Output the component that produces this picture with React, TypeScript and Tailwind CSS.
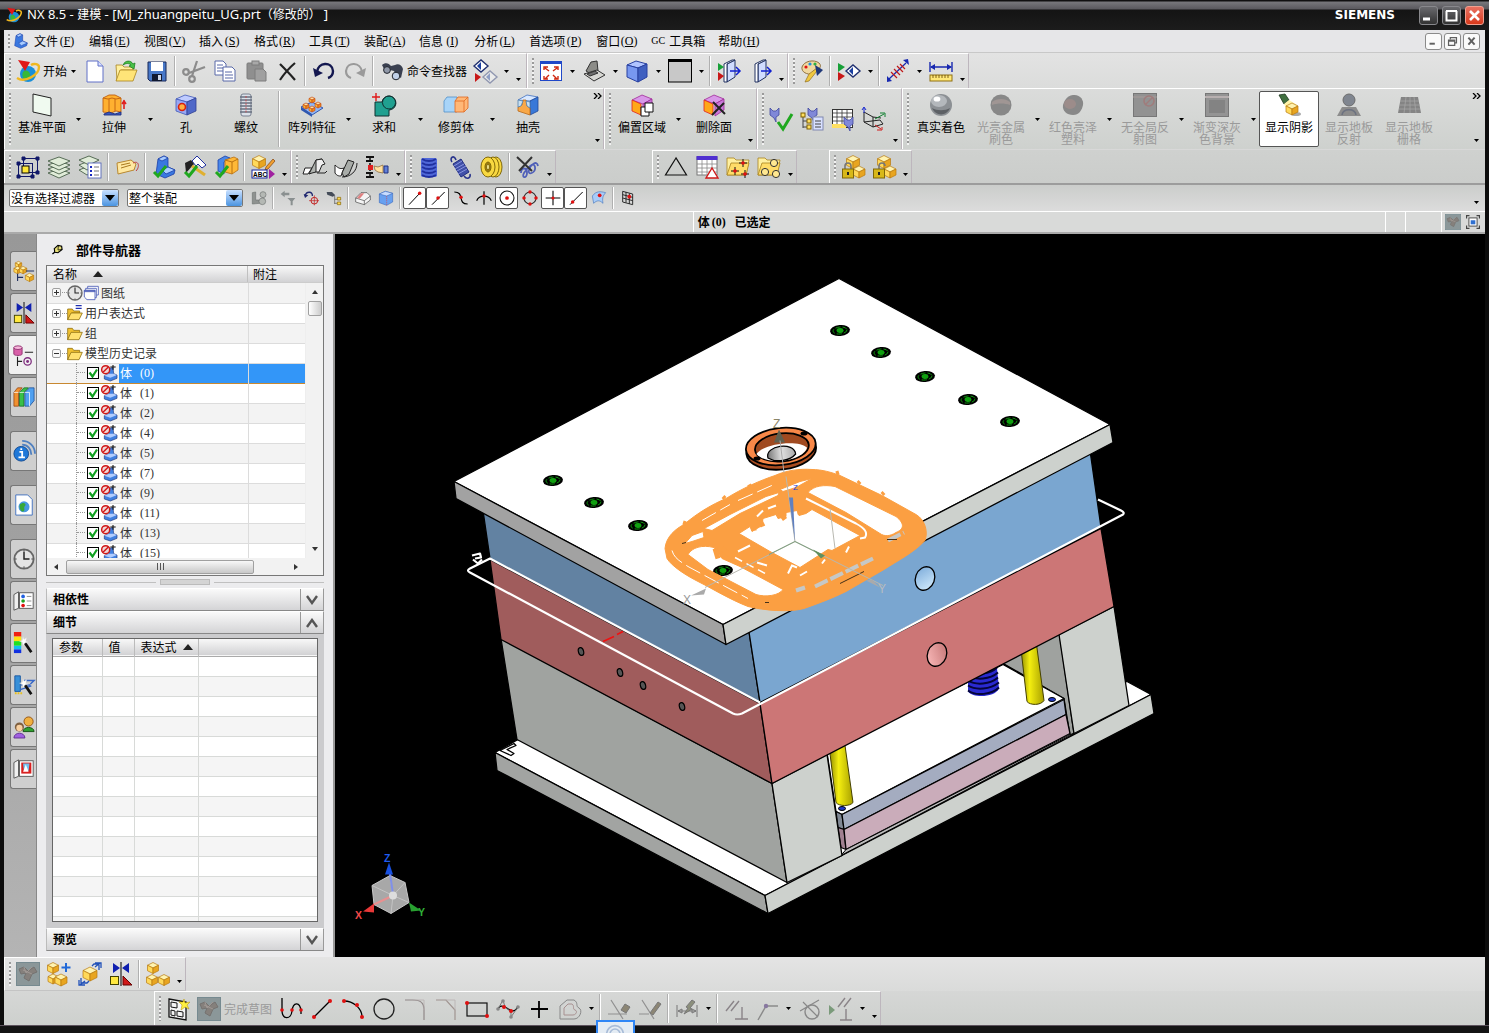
import React, { type ReactNode } from 'react';

/* ------------------------------------------------------------------ */
/* Icon drawings, all on a 24 x 24 grid                                */
/* ------------------------------------------------------------------ */

type Tone = 'yellow' | 'blue' | 'orange' | 'purple';
const tones: Record<Tone, [string, string, string, string]> = {
  yellow: ['#fff3b0', '#ffd95a', '#e8a520', '#b87a10'],
  blue: ['#b4c8ff', '#7c98f0', '#3f5fc8', '#26389a'],
  orange: ['#ffe0a0', '#ffb62e', '#f08a1a', '#c8501a'],
  purple: ['#e2b8f0', '#ffb010', '#c070d8', '#90309a'],
};

function Cube({ x, y, s, tone }: { x: number; y: number; s: number; tone: Tone }) {
  const [top, left, right, line] = tones[tone];
  const h = s / 2;
  const q = s / 4;
  return (
    <g stroke={line} strokeWidth="0.7" strokeLinejoin="round">
      <polygon points={`${x},${y - h} ${x + h},${y - q} ${x},${y} ${x - h},${y - q}`} fill={top} />
      <polygon points={`${x - h},${y - q} ${x},${y} ${x},${y + h} ${x - h},${y + q}`} fill={left} />
      <polygon points={`${x + h},${y - q} ${x},${y} ${x},${y + h} ${x + h},${y + q}`} fill={right} />
    </g>
  );
}

const Dot = ({ x, y, r = 1.8, c = '#e01010' }: { x: number; y: number; r?: number; c?: string }) => (
  <circle cx={x} cy={y} r={r} fill={c} />
);
const L = ({ d, c = '#000', w = 1 }: { d: string; c?: string; w?: number }) => (
  <path d={d} fill="none" stroke={c} strokeWidth={w} />
);
const GreenCheck = ({ d = 'M2 17l4 4L14 11' }: { d?: string }) => (
  <path d={d} fill="none" stroke="#1fa81f" strokeWidth="3" />
);
const BluePart = () => (
  <g stroke="#1a3fa8" strokeWidth="0.8" strokeLinejoin="round">
    <path d="M6 4l6-3 4 2v9l7 3-1 4-9 4-9-4z" fill="#3a78e0" />
    <path d="M6 4l6-3 4 2-6 3z" fill="#a8ccff" />
    <path d="M10 15l6-3 7 3-9 4z" fill="#a8ccff" />
  </g>
);
const FolderShape = () => (
  <g stroke="#a88420" strokeWidth="0.8">
    <path d="M1 3h7l2 2h13l-3 15H1z" fill="#fff0a0" />
    <path d="M1 20L5 8h18l-3 12z" fill="#ffdc68" />
  </g>
);
const Mirror = () => (
  <g>
    <path d="M4 1v10l7-5zM20 1v10l-7-5z" fill="#1020b0" />
    <L d="M12 0v24" />
    <rect x="1.5" y="14.5" width="8" height="8" fill="#ffe840" stroke="#404000" />
    <path d="M14 14v9h9z" fill="#d01818" stroke="#600" />
  </g>
);
const CubeTrio = () => (
  <g>
    <Cube x={7} y={6} s={11} tone="yellow" />
    <Cube x={6} y={18} s={11} tone="yellow" />
    <Cube x={18} y={18} s={11} tone="yellow" />
  </g>
);
const Gizmo = () => <path d="M1 1l3 3h3l3-3v7l-3 2v5l-2-4-4-3z" fill="#8088d8" stroke="#4048a0" strokeWidth="0.8" />;
const Wand = () => (
  <g>
    <path d="M11 9l9 13" stroke="#111" strokeWidth="3" />
    <path d="M11 5l1 3 3-2-1 4 3 1-4 1-2 3-1-4-3-1 3-1z" fill="#fff" stroke="#ccc" strokeWidth="0.4" />
  </g>
);
const Book = () => (
  <g stroke="#555">
    <path d="M1 5l5-3v18l-5 2z" fill="#f0f0f0" />
    <rect x="7" y="3" width="15" height="17" fill="#fff" />
  </g>
);
const Coil = () => (
  <g fill="none" stroke="#2030a0" strokeWidth="2">
    <path d="M5 4c5 3 9 3 14 0M5 8c5 3 9 3 14 0M5 12c5 3 9 3 14 0M5 16c5 3 9 3 14 0M5 20c5 3 9 3 14 0" />
  </g>
);
const ViewBook = () => (
  <g>
    <path d="M10 5l8-4v17l-8 5z" fill="#d0dcff" stroke="#203060" />
    <path d="M7 5l8-4h3l-8 4v18H7z" fill="#fff" stroke="#203060" />
    <path d="M13 12h9M19 8l4 4-4 4" stroke="#1020d0" strokeWidth="1.5" fill="none" />
  </g>
);
const Diamond = ({ x, y }: { x: number; y: number }) => (
  <g>
    <path d={`M${x - 7} ${y}l7-6 7 6-7 6z`} fill="#fff" stroke="#203070" strokeWidth="1.4" />
    <path d={`M${x} ${y - 4}v8l-4-4z`} fill="#1a3fa0" />
  </g>
);

const icons = {
  nx: (
    <g>
      <circle cx="12" cy="15" r="8" fill="#1a8fd8" />
      <path d="M7 13c3-3 6-1 7 2s-2 6-4 6-5-4-3-8z" fill="#38b838" />
      <path d="M1 19c8 5 22-3 22-11 0-3-5-4-8-2" fill="none" stroke="#f0b820" strokeWidth="2.4" />
      <path d="M2 1l12 2-5 9z" fill="#e01818" />
    </g>
  ),
  part: <BluePart />,
  newDoc: (
    <g>
      <path d="M4 2h11l5 5v16H4z" fill="#fff" stroke="#6070c8" />
      <path d="M15 2v5h5" fill="#d8e0ff" stroke="#6070c8" />
    </g>
  ),
  open: (
    <g stroke="#a88420" strokeWidth="0.8">
      <path d="M2 6h6l2 2h9v3H7L3 22z" fill="#fff0a0" />
      <path d="M2 22l4-11h17l-4 11z" fill="#ffe478" />
      <path d="M9 6c2-5 8-5 10-1l2-1-1 6-5-3 2-1c-2-2-5-2-8 0z" fill="#48c048" stroke="#208020" />
    </g>
  ),
  save: (
    <g>
      <path d="M3 3h18v19H5l-2-2z" fill="#4878c8" stroke="#182858" />
      <rect x="6" y="3" width="12" height="9" fill="#fff" />
      <rect x="7" y="15" width="10" height="7" fill="#101830" />
      <rect x="13" y="16" width="3" height="5" fill="#d0d8e8" />
    </g>
  ),
  cut: (
    <g fill="none" stroke="#8c8c8c" strokeWidth="2.2">
      <path d="M15 2L10 17M23 8L7 14" />
      <circle cx="10" cy="20" r="2.8" />
      <circle cx="4" cy="13" r="2.8" />
    </g>
  ),
  copy: (
    <g fill="#fff" stroke="#5868a8">
      <path d="M2 2h8l3 3v11H2z" />
      <path d="M4 6h6M4 9h6M4 12h6" />
      <path d="M10 8h9l3 3v11H10z" />
      <path d="M12 13h7M12 16h8M12 19h8" />
    </g>
  ),
  paste: (
    <g fill="#8f8f8f" stroke="#7c7c7c">
      <rect x="3" y="4" width="16" height="16" rx="1" />
      <rect x="8" y="2" width="7" height="4" fill="#a8a8a8" />
      <path d="M11 10h8l3 3v9H11z" fill="#a0a0a0" />
    </g>
  ),
  del: <path d="M5 5c5 5 10 10 15 16M20 4C14 9 9 15 5 21" stroke="#222" strokeWidth="2.2" fill="none" />,
  undo: (
    <g>
      <path d="M5 13C6 3 20 2 21 12c0 3-2 6-5 7" fill="none" stroke="#141850" strokeWidth="2.4" />
      <path d="M1 9l2 9 8-4z" fill="#141850" />
    </g>
  ),
  redo: (
    <g>
      <path d="M19 13C18 3 4 2 3 12c0 3 2 6 5 7" fill="none" stroke="#9a9a9a" strokeWidth="2.2" />
      <path d="M23 9l-2 9-8-4z" fill="#9a9a9a" />
    </g>
  ),
  finder: (
    <g>
      <path d="M2 6c3-3 7-2 9 1l4-1c3-2 7 0 8 4l-2 9-5-3-2-4-4-1-3 1-3-2z" fill="#3a4050" />
      <circle cx="7" cy="11" r="3.4" fill="#9098a8" stroke="#20242c" />
      <circle cx="16" cy="17" r="3.8" fill="#c0d0e8" stroke="#20242c" />
    </g>
  ),
  orient: (
    <g>
      <Diamond x={8} y={7} />
      <g opacity="0.4">
        <Diamond x={17} y={18} />
      </g>
      <path d="M2 14l6 4-6 5z" fill="#c81818" />
    </g>
  ),
  fit: (
    <g>
      <rect x="1.5" y="2.5" width="21" height="19" fill="#fff" stroke="#2048c8" />
      <path d="M1 2h22v3H1z" fill="#2048c8" />
      <path d="M6 9l4 3M18 9l-4 3M6 20l4-4M18 20l-4-4M5 11V8h4M19 11V8h-4M5 17v3h4M19 17v3h-4" stroke="#d02810" strokeWidth="1.4" fill="none" />
    </g>
  ),
  hinge: (
    <g stroke="#333" strokeLinejoin="round">
      <path d="M4 12L9 3l6-1 1 10-5 4z" fill="#8c8c88" />
      <path d="M2 15l13-4 8 5-11 6z" fill="#d8d8d4" />
      <path d="M5 15l8-3 3 2-8 3z" fill="#707070" />
    </g>
  ),
  shaded: (
    <g stroke="#2840a0" strokeLinejoin="round">
      <path d="M2 6l9-4 11 3-9 4z" fill="#b0c4ff" />
      <path d="M2 6l11 3v14L2 18z" fill="#7898f0" />
      <path d="M22 5l-9 4v14l9-5z" fill="#4060c0" />
    </g>
  ),
  blankBg: (
    <g>
      <rect x="0.5" y="1" width="23" height="22" fill="#c8c8c8" stroke="#000" />
      <path d="M0 0h24v3H0z" />
    </g>
  ),
  viewA: (
    <g>
      <ViewBook />
      <path d="M1 4l6 4-6 4z" fill="#18a038" />
      <path d="M1 13l6 4-6 5z" fill="#c81818" />
    </g>
  ),
  viewB: <ViewBook />,
  palette: (
    <g>
      <path d="M2 8c2-6 12-8 17-4 3 3 1 6-3 7-3 0-4 2-3 4-6 1-12-2-11-7z" fill="#f0d8a0" stroke="#907040" />
      <Dot x={6} y={8} r={1.6} />
      <Dot x={10} y={5} r={1.6} c="#2090e0" />
      <Dot x={15} y={5} r={1.6} c="#30b040" />
      <path d="M17 9l-8 6-4 8 4-1 8-10z" fill="#f0c840" stroke="#907020" strokeWidth="0.7" />
      <path d="M15 6l8 5-6 6z" fill="#203878" />
    </g>
  ),
  play: (
    <g>
      <path d="M1 4l7 4-7 5z" fill="#18a038" />
      <path d="M1 13l7 4-7 5z" fill="#c81818" />
      <Diamond x={16} y={12} />
    </g>
  ),
  measureD: (
    <g>
      <path d="M3 20L20 4" stroke="#1828b0" strokeWidth="1.2" />
      <path d="M5 13l6 6M8 10l6 6M11 7l6 6M14 5l5 5" stroke="#c01818" strokeWidth="1.2" />
      <path d="M1 17l5 5-5 1zM17 1l5-1 1 6z" fill="#1828b0" />
    </g>
  ),
  ruler: (
    <g>
      <path d="M1 3v10M23 3v10M2 8h20" stroke="#1828b0" strokeWidth="1.4" />
      <path d="M1 8l5-3v6zM23 8l-5-3v6z" fill="#1828b0" />
      <rect x="1" y="16" width="22" height="6" fill="#ffe878" stroke="#907010" />
      <path d="M4 16v3M7 16v3M10 16v3M13 16v3M16 16v3M19 16v3" stroke="#604000" strokeWidth="0.8" />
    </g>
  ),
  datum: <path d="M3 1l18 4v18L3 19z" fill="#f0faf0" stroke="#222" />,
  extrude: (
    <g stroke="#c06010" strokeWidth="0.9">
      <path d="M1 5l6-3h6l6 3v14l-5-1-5 2-8-1z" fill="#ffb030" />
      <path d="M1 5l5 1 4-1 4 1 5-1" fill="none" />
      <path d="M7 6v14M13 6v12" />
      <path d="M2 21l5-2 6 2 6-2v3H2z" fill="#3858c0" stroke="#203080" />
      <path d="M22 7v9M20 11l2-3 2 3" stroke="#e02020" strokeWidth="1.6" fill="none" />
    </g>
  ),
  hole: (
    <g>
      <path d="M2 6l9-4 11 3-9 4z" fill="#c0ccff" stroke="#4058b8" strokeWidth="0.8" />
      <path d="M2 6l11 3v13L2 18z" fill="#98a8f4" stroke="#4058b8" strokeWidth="0.8" />
      <path d="M22 5l-9 4v13l9-4z" fill="#5068c8" stroke="#304090" strokeWidth="0.8" />
      <circle cx="8" cy="14" r="3.5" fill="#ffb040" stroke="#d82010" strokeWidth="1.6" />
    </g>
  ),
  thread: (
    <g>
      <rect x="7" y="1" width="10" height="22" rx="2" fill="#dce2ea" stroke="#788090" />
      <path d="M6 4h12M6 7h12M6 10h12M6 13h12M6 16h12M6 19h12" stroke="#687080" strokeWidth="1.3" />
      <path d="M12 3v18" stroke="#d04040" strokeDasharray="2 1.6" strokeWidth="0.8" />
    </g>
  ),
  pattern: (
    <g>
      <path d="M1 14l11-5 11 6-11 7z" fill="#90b8f8" stroke="#3058b0" />
      <Cube x={6} y={13} s={6} tone="orange" />
      <Cube x={12} y={16} s={6} tone="orange" />
      <Cube x={12} y={7} s={6} tone="orange" />
      <Cube x={18} y={12} s={6} tone="orange" />
      <path d="M1 14v3l11 7v-3z" fill="#3058b0" />
    </g>
  ),
  unite: (
    <g>
      <path d="M0 4h8M4 0v8" stroke="#e01818" strokeWidth="1.4" />
      <path d="M3 9h7a7 7 0 1 1 7 8v6H3z" fill="#20a090" stroke="#103030" />
      <circle cx="17" cy="9.5" r="6.5" fill="none" stroke="#103030" />
    </g>
  ),
  trim: (
    <g strokeWidth="0.8">
      <path d="M0 8l3-4h10v15H0z" fill="#a8d4f8" stroke="#5090c8" />
      <path d="M11 8l3-4h10v11l-4 4h-9z" fill="#ffb878" stroke="#e06820" />
      <path d="M11 8h9l4-4M20 8v11" fill="none" stroke="#e06820" />
    </g>
  ),
  shell: (
    <g strokeWidth="0.8">
      <path d="M2 7l9-5 11 2-8 4z" fill="#d8e8ff" stroke="#4070c0" />
      <path d="M22 4l-8 4v14l8-4z" fill="#3878d8" stroke="#204898" />
      <path d="M2 14l4-2 1-5h3l1 6 3 2v7L2 18z" fill="#f8a848" stroke="#b86818" />
      <path d="M2 14V7l5 1-2 5z" fill="#c8e0f0" stroke="#5080b0" />
      <path d="M10 8l4 1v6l-3-2z" fill="#c8e0f0" stroke="#5080b0" />
    </g>
  ),
  offset: (
    <g>
      <path d="M2 7l10-5 10 4-9 5z" fill="#d898e8" stroke="#a02898" strokeWidth="0.8" />
      <path d="M2 7l9 4v11L2 18z" fill="#ffa818" stroke="#e02020" strokeWidth="0.8" />
      <path d="M13 11l9-5v11l-9 6z" fill="#c878d8" stroke="#a02898" strokeWidth="0.8" />
      <path d="M15 10h8v9h-4v4h-8v-9h4z" fill="#fff" stroke="#111" />
      <path d="M15 14v5h4" fill="none" stroke="#111" />
    </g>
  ),
  delFace: (
    <g>
      <path d="M2 7l10-5 10 4-9 5z" fill="#d898e8" stroke="#a02898" strokeWidth="0.8" />
      <path d="M2 7l9 4v11L2 18z" fill="#ffa818" stroke="#e02020" strokeWidth="0.8" />
      <path d="M13 11l9-5v11l-9 6z" fill="#c878d8" stroke="#a02898" strokeWidth="0.8" />
      <path d="M11 9l12 12M22 10L10 22" stroke="#222" strokeWidth="2" />
    </g>
  ),
  checkG: (
    <g>
      <Gizmo />
      <GreenCheck d="M9 15l5 7 9-15" />
    </g>
  ),
  treeG: (
    <g>
      <g transform="translate(7 0)">
        <Gizmo />
      </g>
      <rect x="13" y="10" width="10" height="13" fill="#d8e0ff" stroke="#8088b0" />
      <path d="M15 14h6M15 17h6M15 20h6M3 9v12M3 14h5M3 20h5" stroke="#444" />
      <rect x="1" y="6" width="4" height="4" fill="#ffe060" stroke="#806000" />
      <rect x="7" y="12" width="4" height="4" fill="#ffe060" stroke="#806000" />
      <rect x="7" y="18" width="4" height="4" fill="#ffe060" stroke="#806000" />
    </g>
  ),
  tableG: (
    <g>
      <rect x="1.5" y="2.5" width="20" height="18" fill="#fff" stroke="#333" />
      <path d="M1 6h21M1 10h21M1 14h21M6 2v18M11 2v18M16 2v18" stroke="#333" strokeWidth="0.8" />
      <path d="M1 17h14v4H1z" fill="#ffe060" />
      <g transform="translate(12 9)">
        <Gizmo />
      </g>
    </g>
  ),
  csys: (
    <g>
      <path d="M2 5l9 5v10l-9-5zM11 10l8 1M2 15l16-2 3 4-10 3" fill="none" stroke="#222" />
      <path d="M2 6V1M0 3l2-3 2 3" stroke="#1828d0" fill="none" />
      <path d="M13 12l9-5M18 6h5v4" stroke="#108030" fill="none" />
      <path d="M13 18l6 4M15 23h5v-3" stroke="#d01818" fill="none" />
    </g>
  ),
  sphere: (
    <g>
      <circle cx="12" cy="12" r="11" fill="#8c9094" />
      <ellipse cx="10" cy="8" rx="8" ry="6" fill="#b4b8bc" />
      <ellipse cx="8" cy="6" rx="3.4" ry="2.6" fill="#fff" />
      <path d="M3 15c5 3 13 3 18 0-3 8-14 9-18 0z" fill="#5c6064" />
    </g>
  ),
  sphereDim: (
    <g>
      <circle cx="12" cy="12" r="10.5" fill="#888" />
      <path d="M3 9c5-4 13-4 18 0v3c-5-2-13-2-18 0z" fill="#a09694" />
    </g>
  ),
  plasticDim: (
    <g>
      <path d="M12 2c7-1 11 5 10 10s-4 10-10 10S1 18 2 12c1-3 3-9 10-10z" fill="#888" />
      <ellipse cx="9" cy="11" rx="6" ry="5" fill="#9c8c8a" />
    </g>
  ),
  bgDim: (
    <g>
      <rect x="0.5" y="0.5" width="23" height="23" fill="#929292" stroke="#777" />
      <path d="M0 4h24" stroke="#a89c9a" />
      <circle cx="16" cy="8" r="5" fill="none" stroke="#a07c7c" strokeWidth="1.6" />
      <path d="M12 12l8-8" stroke="#a07c7c" strokeWidth="1.4" />
    </g>
  ),
  bgDim2: (
    <g>
      <rect x="0.5" y="0.5" width="23" height="23" fill="#949494" stroke="#777" />
      <path d="M0 4h24" stroke="#b8b0b0" strokeWidth="2" />
      <rect x="4" y="7" width="16" height="13" fill="#838383" />
    </g>
  ),
  lamp: (
    <g>
      <path d="M2 2l6-1 4 6-5 4z" fill="#407040" stroke="#203820" strokeWidth="0.8" />
      <path d="M7 11l5-4 8 5-8 8z" fill="#fff4a8" />
      <ellipse cx="19" cy="21" rx="5" ry="2" fill="#aaa" />
      <Cube x={15} y={16} s={12} tone="yellow" />
    </g>
  ),
  floorDim: (
    <g>
      <path d="M5 14h14l5 9H0z" fill="#8c8c8c" />
      <circle cx="12" cy="7" r="6" fill="#808690" stroke="#6c6c6c" />
      <path d="M5 22c1-7 13-7 14 0" fill="none" stroke="#6c7280" strokeWidth="1.6" />
    </g>
  ),
  gridDim: (
    <g>
      <path d="M4 4h17l3 16H1z" fill="#848484" />
      <path d="M3 8h19M3 12h20M2 16h21M9 4L7 20M13 4v16M17 4l2 16" stroke="#a4a4a4" strokeWidth="0.8" />
    </g>
  ),
  sketchBox: (
    <g stroke="#101868" fill="none">
      <rect x="7.5" y="3.5" width="14" height="14" />
      <rect x="2.5" y="8.5" width="14" height="13" />
      <rect x="6" y="11" width="7" height="7" fill="#ffe838" stroke="#000" />
      <path d="M6 2h3v3H6zM20 2h3v3h-3zM20 16h3v3h-3zM1 7h3v3H1zM15 20h3v3h-3zM1 20h3v3H1z" fill="#101868" />
    </g>
  ),
  layers: (
    <g fill="#e0ecd8" stroke="#486048" strokeWidth="0.9">
      <path d="M1 18l11-4 11 4-11 5z" />
      <path d="M1 14l11-4 11 4-11 5z" />
      <path d="M1 10l11-4 11 4-11 5z" />
      <path d="M1 6l11-4 11 4-11 5z" />
    </g>
  ),
  layerList: (
    <g fill="#e0ecd8" stroke="#486048" strokeWidth="0.9">
      <path d="M1 15l10-4 8 4-10 5z" />
      <path d="M1 10l10-4 8 4-10 5z" />
      <path d="M1 5l10-4 10 4-10 5z" />
      <rect x="10" y="8" width="13" height="15" fill="#fff" stroke="#5868b8" />
      <path d="M12 12h2M12 16h2M12 20h2" stroke="#1828c0" strokeWidth="2" />
      <path d="M16 12h5M16 16h5M16 20h5" stroke="#666" />
    </g>
  ),
  tag: (
    <g>
      <path d="M2 8l14-3 5 4-2 6-16 4z" fill="#ffe8a0" stroke="#b88830" />
      <path d="M6 10l9-2M6 13l10-3" stroke="#a87820" />
      <path d="M18 8c6-3 7 4 3 8" fill="none" stroke="#c04040" />
    </g>
  ),
  partCheck: (
    <g>
      <BluePart />
      <GreenCheck />
    </g>
  ),
  hammerCheck: (
    <g>
      <path d="M9 6L14 1l9 9-4 3-4-4-2 2z" fill="#fff" stroke="#2030a0" />
      <path d="M2 8l6-3 3 4-8 9z" fill="#222" />
      <path d="M9 11l13 9" stroke="#e0b030" strokeWidth="3" />
      <GreenCheck />
    </g>
  ),
  cubeCheck: (
    <g>
      <path d="M4 5l7-4 5 2-6 4v12l-6-3z" fill="#4a88e8" stroke="#1a3fa8" strokeWidth="0.8" />
      <path d="M11 5l9-3 4 2v11l-6 4-7-2z" fill="#ffb838" stroke="#b87010" strokeWidth="0.8" />
      <path d="M11 5l7 2v12M18 7l6-3" fill="none" stroke="#b87010" />
      <GreenCheck />
    </g>
  ),
  abc: (
    <g>
      <Cube x={8} y={7} s={13} tone="yellow" />
      <path d="M22 4l2 2-7 8-3 1 1-3z" fill="#f0a030" stroke="#804010" strokeWidth="0.7" />
      <rect x="1" y="15" width="15" height="8" fill="#fff" stroke="#1828a0" />
      <text x="2" y="21.500" fontSize="6.500" fontWeight="bold" fontFamily="Liberation Sans">ABC</text>
      <path d="M18 14l6 5-6 5z" fill="#a020a0" />
    </g>
  ),
  bendA: (
    <g stroke="#222" strokeLinejoin="round">
      <path d="M2 13h7l-4 6H0z" fill="#fff" />
      <path d="M6 19l7-14 6-1-6 13-4 1z" fill="#b0b4b0" />
      <path d="M13 5l6-1 3 5-3 1-3 7h-3z" fill="#f0f0f0" />
      <path d="M14 18h8l2-2" fill="none" />
    </g>
  ),
  bendB: (
    <g stroke="#222" strokeLinejoin="round">
      <path d="M1 10c4 4 6 4 9 3l-3 8c-2 0-4 0-6-3z" fill="#fff" />
      <path d="M8 18l6-13 6 2-5 12-5 3z" fill="#a8aca8" />
      <path d="M23 8c0 8-6 14-15 14" fill="none" />
    </g>
  ),
  stretch: (
    <g>
      <path d="M1 2h8M1 22h8M1 6h7M1 18h7" stroke="#111" strokeWidth="2" />
      <path d="M5 3v18" stroke="#111" strokeWidth="1.5" strokeDasharray="3 2" />
      <rect x="3" y="10" width="5" height="5" fill="#e02020" />
      <path d="M9 11l4 1 5-2v8l-5-1-3-2z" fill="#ffe0a0" stroke="#907040" strokeWidth="0.8" />
      <path d="M19 11h4v7h-4z" fill="#6080d8" stroke="#203080" />
    </g>
  ),
  springV: (
    <g>
      <rect x="4" y="3" width="16" height="19" rx="2" fill="#5068d8" />
      <Coil />
    </g>
  ),
  springD: (
    <g>
      <path d="M5 9l8-5 8 13-8 5z" fill="#4050a8" stroke="#202c80" />
      <path d="M6 11l8-5M7 14l9-5M9 16l9-5M10 19l9-5" stroke="#8894e0" />
      <path d="M8 5C6-1 1 3 4 7M16 21c3 4 7 2 6-2" fill="none" stroke="#28348c" strokeWidth="1.6" />
    </g>
  ),
  roll: (
    <g fill="#f8d840" stroke="#806808">
      <ellipse cx="17" cy="12" rx="6" ry="10" />
      <ellipse cx="14" cy="12" rx="6" ry="10" />
      <ellipse cx="9" cy="12" rx="7" ry="10" />
      <ellipse cx="9" cy="12" rx="3" ry="5" fill="#a08010" />
      <ellipse cx="9" cy="12" rx="1.4" ry="3" fill="#fff4a0" />
    </g>
  ),
  noSpring: (
    <g fill="none">
      <path d="M5 18c0-6 6-6 6 0s-6 5-3 0 10-12 11-6-8 9-6 3 8-10 9-4" stroke="#5060b8" strokeWidth="1.8" />
      <path d="M1 2l15 14M16 2L3 16" stroke="#333" strokeWidth="2" />
    </g>
  ),
  tri: <path d="M12 3L1.5 20h21z" fill="none" stroke="#111" strokeWidth="1.2" />,
  tableTri: (
    <g>
      <rect x="2" y="2" width="20" height="18" fill="#fff" stroke="#777" />
      <path d="M2 9h20M2 13h20M2 17h20M7 5v15M12 5v15M17 5v15" stroke="#888" strokeWidth="0.8" />
      <path d="M1.500 1h21v4h-21z" fill="#5030d0" />
      <path d="M17 13l-6 10h12z" fill="#fff" stroke="#d01818" strokeWidth="1.4" />
    </g>
  ),
  folderPts: (
    <g>
      <FolderShape />
      <path d="M13 8h8M17 4v8M5 16h8M9 12v8M15 19h8M19 15v8" stroke="#111" />
      <Dot x={17} y={8} />
      <Dot x={9} y={16} />
      <Dot x={19} y={19} />
    </g>
  ),
  folderCircles: (
    <g>
      <FolderShape />
      <g fill="#ffe890" stroke="#333">
        <circle cx="17" cy="8" r="3.6" />
        <circle cx="8" cy="17" r="3.6" />
        <circle cx="19" cy="19" r="3.6" />
      </g>
    </g>
  ),
  lockA: (
    <g>
      <Cube x={12} y={7} s={13} tone="yellow" />
      <Cube x={18} y={17} s={12} tone="yellow" />
      <path d="M4 14v-3a3 3 0 0 1 6 0v3" fill="none" stroke="#777" strokeWidth="1.6" />
      <rect x="1.5" y="14" width="11" height="9" fill="#d8b818" stroke="#806808" />
      <path d="M7 17v3" stroke="#222" strokeWidth="2" />
    </g>
  ),
  lockB: (
    <g>
      <Cube x={12} y={7} s={13} tone="yellow" />
      <Cube x={18} y={17} s={12} tone="yellow" />
      <path d="M7 14v-3a3 3 0 0 1 6 0" fill="none" stroke="#777" strokeWidth="1.6" />
      <rect x="1.5" y="14" width="11" height="9" fill="#d8b818" stroke="#806808" />
      <path d="M7 17v3" stroke="#222" strokeWidth="2" />
    </g>
  ),
  filterDim: (
    <g fill="#8e9290" stroke="#707472">
      <path d="M2 4l5-1v12h5l1 5-11 1z" />
      <circle cx="18" cy="7" r="4.500" fill="#b4b8b4" />
      <circle cx="17" cy="17" r="5" fill="#b4b8b4" />
    </g>
  ),
  funnelDim: (
    <g fill="#8a9090">
      <path d="M1 6l6-5v3h7v4H7v3zM11 12h12l-4 5v6h-3v-6z" />
    </g>
  ),
  snapCurve: (
    <g>
      <path d="M3 9C5 1 15 2 14 9" fill="none" stroke="#202870" strokeWidth="2" />
      <path d="M1 6l2 6 5-4z" fill="#202870" />
      <circle cx="17" cy="16" r="5" fill="none" stroke="#c01818" strokeWidth="1.4" />
      <path d="M17 8v15M9 16h15" stroke="#c01818" />
    </g>
  ),
  snapFind: (
    <g>
      <path d="M1 3h8l5 5-4 2-8-3z" fill="#444c58" />
      <path d="M13 9v12M13 14h4M13 20h4" stroke="#555" />
      <path d="M17 11h5v4h-5zM17 18h5v4h-5z" fill="#ffd850" stroke="#806000" />
    </g>
  ),
  body: (
    <g stroke="#444" strokeLinejoin="round">
      <path d="M1 12l8-8h9l5 5v6l-9 7-13-4z" fill="#f4f4f4" />
      <path d="M1 12l13 4 9-7M14 16v6" fill="none" />
      <path d="M9 5h5l-7 8-4-1z" fill="#e08080" stroke="none" />
    </g>
  ),
  bodyBlue: (
    <g strokeWidth="0.8">
      <path d="M2 6l9-4 11 3v13l-9 5-11-4z" fill="#68a0f0" stroke="#3060b8" />
      <path d="M2 6l11 3 9-4-11-3z" fill="#c8dcff" stroke="#3060b8" />
      <path d="M13 9v14" stroke="#e04040" strokeDasharray="2 1" />
    </g>
  ),
  lineEnd: (
    <g>
      <L d="M3 22L20 4" w={1.5} />
      <Dot x={19} y={5} r={2.6} />
    </g>
  ),
  lineMid: (
    <g>
      <L d="M3 22L22 3" w={1.5} />
      <Dot x={12} y={12} r={2.6} />
    </g>
  ),
  curvePt: (
    <g>
      <L d="M2 3c8 0 9 4 10 9s2 9 10 9" w={1.8} />
      <Dot x={12} y={11} r={2.6} />
    </g>
  ),
  crossPt: (
    <g>
      <L d="M1 16C5 7 19 7 23 16M12 2v20" w={1.8} />
      <Dot x={12} y={9} r={2.6} />
    </g>
  ),
  centerPt: (
    <g>
      <circle cx="12" cy="12" r="10.500" fill="none" stroke="#111" strokeWidth="1.600" />
      <Dot x={12} y={12} r={2.8} />
    </g>
  ),
  quadPt: (
    <g>
      <circle cx="12" cy="12" r="9" fill="none" stroke="#333" strokeWidth="1.600" />
      <Dot x={12} y={3} r={2.6} />
      <Dot x={12} y={21} r={2.6} />
      <Dot x={3} y={12} r={2.6} />
      <Dot x={21} y={12} r={2.6} />
    </g>
  ),
  plusPt: (
    <g>
      <L d="M12 1v22M1 12h22" w={1.6} />
      <Dot x={12} y={12} r={2.4} />
    </g>
  ),
  linePt: (
    <g>
      <L d="M3 22L22 3" w={1.5} />
      <Dot x={7} y={18} r={2.6} />
    </g>
  ),
  facePt: (
    <g>
      <path d="M2 9c6-8 12-7 20-5-5 5-5 10-4 16-5-5-9-5-14 0z" fill="#a8ccf8" stroke="#4878c0" />
      <Dot x={13} y={8} r={2.8} />
    </g>
  ),
  gridPt: (
    <g>
      <path d="M4 2l15 4v16L4 18zM4 7l15 4M4 12l15 4M9 3v16M14 5v16" fill="none" stroke="#222" strokeWidth="1.4" />
      <Dot x={14} y={10} r={2.8} />
    </g>
  ),
  shadeBox: (
    <g>
      <rect x="0.5" y="0.5" width="23" height="23" fill="#8b9799" stroke="#768a90" />
      <path d="M3 7l5-2 4 4 6-4 3 5-5 2-3 7-5-3 2-5-5 1z" fill="#85807c" stroke="#757270" />
      <path d="M8 5l2 6 6-6M7 8l9 4" stroke="#a09894" fill="none" />
    </g>
  ),
  fullscreen: (
    <g>
      <path d="M1 6V1h5M18 1h5v5M23 18v5h-5M6 23H1v-5" fill="none" stroke="#444" strokeWidth="2" />
      <rect x="5" y="5" width="14" height="14" fill="#fff" stroke="#444" strokeWidth="1.6" />
      <path d="M8 9h8v7H8z" fill="#3070d0" />
    </g>
  ),
  asmNav: (
    <g>
      <Cube x={6} y={5} s={7} tone="yellow" />
      <Cube x={5} y={11} s={8} tone="yellow" />
      <Cube x={11} y={11} s={8} tone="yellow" />
      <path d="M14 12h9M5 15v8M5 19h6" stroke="#203060" strokeWidth="1.2" />
      <Cube x={18} y={19} s={9} tone="yellow" />
    </g>
  ),
  mirror: <Mirror />,
  partNav: (
    <g>
      <path d="M2 4v7c0 2 9 2 9 0V4z" fill="#d860a8" stroke="#903070" />
      <ellipse cx="6.500" cy="4" rx="4.500" ry="2" fill="#f8b8dc" stroke="#903070" />
      <path d="M14 9h9M6 14v10M6 19h5" stroke="#222" strokeWidth="1.2" />
      <circle cx="17" cy="19" r="4" fill="none" stroke="#803080" strokeWidth="1.4" />
      <Dot x={17} y={19} c="#803080" r={1.6} />
    </g>
  ),
  books: (
    <g strokeWidth="0.8">
      <path d="M1 7l4-5h5L6 7v15H1z" fill="#f09030" stroke="#904010" />
      <path d="M7 7l5-5h5l-5 5v15H7z" fill="#38c048" stroke="#106020" />
      <path d="M13 7l5-5h5v14l-5 6h-5z" fill="#50a0f0" stroke="#184890" />
      <path d="M1 7h5M7 7h5M13 7h5v15" fill="none" stroke="#fff" />
    </g>
  ),
  info: (
    <g>
      <path d="M10 5c6 0 10 5 10 11M10 1c8 0 14 6 14 14" fill="none" stroke="#5080c0" strokeWidth="2" />
      <circle cx="9" cy="15" r="8" fill="#1f78d8" stroke="#104890" />
      <path d="M9 9v2M7 13h3v6M6 19h7" stroke="#fff" strokeWidth="2" fill="none" />
    </g>
  ),
  web: (
    <g>
      <path d="M3 1h13l5 5v17H3z" fill="#fff" stroke="#4070c0" />
      <circle cx="12" cy="14" r="6" fill="#4898e0" />
      <path d="M8 11c4-3 7 0 5 2s1 5-2 6-5-6-3-8z" fill="#38a838" />
    </g>
  ),
  clock: (
    <g>
      <circle cx="12" cy="12" r="10.500" fill="#e4e4e4" stroke="#666" strokeWidth="2" />
      <path d="M12 4v8h6" fill="none" stroke="#222" strokeWidth="1.6" />
      <path d="M12 2v2M12 20v2M2 12h2M20 12h2" stroke="#444" />
    </g>
  ),
  roles: (
    <g>
      <Book />
      <Dot x={11} y={7} c="#2060e0" r={2} />
      <Dot x={11} y={12} c="#20a020" r={2} />
      <Dot x={11} y={17} r={2} />
      <path d="M15 7h5M15 12h5M15 17h5" stroke="#888" />
    </g>
  ),
  spectrum: (
    <g>
      <path d="M1 0h8v5H1z" fill="#f02010" />
      <path d="M1 5h8v5H1z" fill="#ffe010" />
      <path d="M1 10h8v5H1z" fill="#20e020" />
      <path d="M1 15h8v4H1z" fill="#10c0f0" />
      <path d="M1 19h8v4H1z" fill="#1030e0" />
      <Wand />
    </g>
  ),
  wandBlue: (
    <g>
      <path d="M2 2h6v17H2z" fill="#3890d8" stroke="#1858a0" />
      <path d="M12 7h11l-4 4M9 12h10M8 17l12-4" stroke="#3868c8" strokeWidth="1.6" fill="none" />
      <path d="M2 21h8" stroke="#e8c020" strokeWidth="2" strokeDasharray="2 1" />
      <Wand />
    </g>
  ),
  people: (
    <g>
      <path d="M11 17c0-6 12-6 12 0z" fill="#30a030" stroke="#105010" />
      <circle cx="17" cy="6" r="5" fill="#f0b040" stroke="#905010" />
      <circle cx="7" cy="12" r="5" fill="#806040" />
      <circle cx="7" cy="13" r="3.400" fill="#f8d0a0" />
      <path d="M1 24c0-7 12-7 12 0z" fill="#a060e0" stroke="#603090" />
    </g>
  ),
  photoBook: (
    <g>
      <Book />
      <rect x="9" y="5" width="11" height="12" fill="#d82020" />
      <path d="M11 6h7l-1 8h-5z" fill="#70c0f0" />
      <path d="M14 7l3 8h-6z" fill="#fff" />
    </g>
  ),
  pin: (
    <g>
      <path d="M1 22l6-5" stroke="#000" strokeWidth="3" />
      <path d="M5 10l8-7 8 2 1 7-9 7-7-1z" fill="#e8e078" stroke="#000" strokeWidth="2.500" />
      <path d="M14 3l-1 10 9-1" fill="none" stroke="#000" strokeWidth="1.600" />
    </g>
  ),
  sheet: (
    <g fill="#fff" stroke="#5060b8" strokeWidth="1.300">
      <path d="M7 2h16v13H7z" />
      <path d="M4 5h16v14H4z" />
      <path d="M2 8h16v14H6l-4-4z" />
      <path d="M2 8h16v2H2z" fill="#7080d0" />
    </g>
  ),
  folder: (
    <g stroke="#907010" strokeWidth="1.200">
      <path d="M1 5h7l2 3h9v4H7L1 22z" fill="#f0c030" />
      <path d="M1 22l5-11h17l-5 11z" fill="#ffe070" />
    </g>
  ),
  folderEq: (
    <g stroke="#907010" strokeWidth="1.200">
      <path d="M1 6h7l2 3h9v3H7L1 22z" fill="#f0c030" />
      <path d="M1 22l5-10h17l-5 10z" fill="#ffe070" />
      <path d="M13 1h9M13 5h9" stroke="#2030b0" strokeWidth="2" />
    </g>
  ),
  bodyNode: (
    <g>
      <path d="M5 16l7-3V5l6-1 1 9 5 2v5l-10 4-9-3z" fill="#4080e0" stroke="#203880" />
      <path d="M5 16l9 3 10-4-5-2-7 0z" fill="#b0ccff" />
      <path d="M14 3h8M18 0v7" stroke="#111" strokeWidth="1.600" />
      <circle cx="7" cy="7" r="6" fill="#f0d8d8" stroke="#d01818" strokeWidth="2.200" />
      <path d="M3 11l8-8" stroke="#d01818" strokeWidth="2.200" />
    </g>
  ),
  cubePlus: (
    <g>
      <Cube x={6} y={6} s={11} tone="yellow" />
      <Cube x={6} y={17} s={10} tone="yellow" />
      <Cube x={14} y={18} s={12} tone="yellow" />
      <path d="M19 1v9M14.500 5.500h9" stroke="#2068d8" strokeWidth="2" />
    </g>
  ),
  cubeMove: (
    <g>
      <Cube x={12} y={12} s={14} tone="yellow" />
      <path d="M17 5l5-4M17 1h6v5M14 4l2-2h5v6" stroke="#2050b8" strokeWidth="1.300" fill="none" />
      <path d="M7 19l-5 4M1 18v5h6M3 16v5h6l2-2" stroke="#2050b8" strokeWidth="1.300" fill="none" />
    </g>
  ),
  cubeTrio: <CubeTrio />,
  sketchNew: (
    <g>
      <path d="M3 2l17 3v18L3 20z" fill="#f4f4f4" stroke="#111" strokeWidth="1.300" />
      <path d="M5 5l6 1v5l-6-1zM5 13l4 1v5l-4-1zM11 14l6 1v5l-6-1z" fill="none" stroke="#111" />
      <path d="M18 2l1 4 5-1-3 3 2 4-4-2-4 3 1-5-3-3 4 0z" fill="#fff040" stroke="#b09000" strokeWidth="0.500" />
    </g>
  ),
  profile: (
    <g>
      <L d="M3 1v12c0 10 9 10 10 1s8-10 9 0v3" w={1.3} />
      <Dot x={3} y={13} />
      <Dot x={13} y={13} />
      <Dot x={22} y={13} />
    </g>
  ),
  line: (
    <g>
      <L d="M4 20L20 4" w={1.3} />
      <Dot x={4} y={20} r={2} />
      <Dot x={20} y={4} r={2} />
    </g>
  ),
  arc: (
    <g>
      <L d="M3 4c9 0 18 7 18 16" w={1.3} />
      <Dot x={3} y={4} r={2} />
      <Dot x={16} y={8} r={2} />
      <Dot x={21} y={20} r={2} />
    </g>
  ),
  circle: <circle cx="12" cy="12" r="10" fill="none" stroke="#222" strokeWidth="1.300" />,
  fillet: (
    <g>
      <L d="M2 3h8c8 0 11 3 11 9v11" c="#908888" w={1.2} />
      <L d="M11 3h10v10" c="#b8b0b0" w={0.8} />
    </g>
  ),
  chamfer: (
    <g>
      <L d="M2 3h10l9 10v10" c="#a09490" w={1.2} />
      <L d="M12 3h9v10" c="#b8b0b0" w={0.8} />
    </g>
  ),
  rect: (
    <g>
      <rect x="2" y="6" width="20" height="13" fill="none" stroke="#111" strokeWidth="1.200" />
      <Dot x={2} y={6} r={2} />
      <Dot x={22} y={19} r={2} />
    </g>
  ),
  spline: (
    <g>
      <L d="M2 12c2-4 4-3 7-2s9 9 13-1" w={1.3} />
      <L d="M2 12L7 3l2 7 6 5v5l7-10" c="#777" />
      <Dot x={8} y={10} r={2} />
      <Dot x={15} y={14} r={2} />
      <Dot x={2} y={12} c="#888" />
      <Dot x={7} y={4} c="#888" />
      <Dot x={22} y={10} c="#888" />
      <Dot x={15} y={20} c="#888" />
    </g>
  ),
  plus: <L d="M12 4v17M4 12h17" w={1.8} />,
  offsetC: (
    <g fill="none" stroke="#888">
      <path d="M2 22V9l7-6h7c5 3 1 6 5 8s1 11-5 11z" />
      <path d="M6 18v-7l4-4h4c3 2 0 5 3 6s1 5-2 5z" stroke="#a89090" />
    </g>
  ),
  trimC: (
    <g>
      <L d="M4 3l12 19M1 17h19" c="#909090" w={1.2} />
      <path d="M14 13l4-6 5 3-4 6z" fill="#8c8674" stroke="#777" />
    </g>
  ),
  extendC: (
    <g>
      <L d="M4 3l12 19M1 17h10" c="#909090" w={1.2} />
      <path d="M12 16l8-11 3 2-8 11z" fill="#8c8674" stroke="#777" />
    </g>
  ),
  dim: (
    <g>
      <L d="M2 8v12M22 8v12M3 14h18M3 14l4-2v4zM21 14l-4-2v4z" c="#777" />
      <path d="M9 17l4-6-2-1 6-7 3 2-5 6 2 1z" fill="#8c907c" stroke="#777" />
    </g>
  ),
  para: <L d="M2 14L10 4M7 14L15 4M18 10v12M11 22h13" c="#8a8488" w={1.4} />,
  perp: (
    <g>
      <L d="M3 23l8-14h12" c="#8a8a8a" w={1.4} />
      <Dot x={11} y={9} c="#8878a0" r={2.2} />
    </g>
  ),
  tangent: (
    <g>
      <circle cx="14" cy="15" r="7" fill="none" stroke="#888" strokeWidth="1.400" />
      <L d="M2 14L21 3M5 5l15 15" c="#888" w={1.2} />
    </g>
  ),
  showCon: (
    <g>
      <path d="M0 8l6 5-6 5z" fill="#7a9a7a" />
      <L d="M9 10l7-9M15 10l7-9M17 12v11M11 23h12" c="#8a8488" w={1.4} />
    </g>
  ),
} satisfies Record<string, ReactNode>;

type IconName = keyof typeof icons;

const Icon = ({ name, className = 'size-6' }: { name: IconName; className?: string }) => (
  <svg viewBox="0 0 24 24" className={`shrink-0 overflow-visible ${className}`} aria-hidden="true">
    {icons[name]}
  </svg>
);

/* ------------------------------------------------------------------ */
/* Toolbar parts                                                       */
/* ------------------------------------------------------------------ */

const Grip = () => (
  <span className="my-1 mr-px ml-1 w-[2px] shrink-0 self-stretch bg-[repeating-linear-gradient(to_bottom,#9a9a9a_0_2px,#f2f2f2_2px_4px)]" />
);
const Sep = () => (
  <span className="mx-[2px] my-[2px] w-[2px] shrink-0 self-stretch border-l border-[#b0b0b0] bg-white" />
);
const Drop = () => (
  <button aria-label="更多选项" className="flex w-3 shrink-0 items-center justify-center">
    <svg viewBox="0 0 5 3" className="h-[3px] w-[5px]">
      <path d="M0 0h5L2.500 3z" />
    </svg>
  </button>
);
const Overflow = ({ wide = false }: { wide?: boolean }) => (
  <button aria-label="工具条选项" className="flex w-3 shrink-0 flex-col items-center justify-end self-stretch pb-[7px]">
    {wide && (
      <svg viewBox="0 0 9 6" className="mt-1 mb-auto h-[6px] w-[9px]">
        <path d="M1 0l3 3-3 3M5 0l3 3-3 3" fill="none" stroke="#000" strokeWidth="1.300" />
      </svg>
    )}
    <svg viewBox="0 0 5 3" className="h-[3px] w-[5px]">
      <path d="M0 0h5L2.500 3z" />
    </svg>
  </button>
);
const Tool = ({ icon, label }: { icon: IconName; label: string }) => (
  <button aria-label={label} className="flex w-[31px] shrink-0 items-center justify-center">
    <Icon name={icon} />
  </button>
);
const Snap = ({ icon, label, on = false }: { icon: IconName; label: string; on?: boolean }) => (
  <button
    aria-label={label}
    aria-pressed={on}
    className={`flex h-[22px] w-[23px] shrink-0 items-center justify-center self-center ${
      on ? 'rounded-[2px] border border-[#555] bg-white' : ''
    }`}
  >
    <Icon name={icon} className="size-4" />
  </button>
);
const Big = ({ icon, text, off, on }: { icon: IconName; text: string; off?: boolean; on?: boolean }) => (
  <button
    className={`my-[2px] flex w-[60px] shrink-0 flex-col items-center self-stretch text-xs ${
      off ? 'text-[#9a9a9a]' : ''
    } ${on ? 'rounded-[2px] border border-[#555] bg-white pt-px' : 'pt-[2px]'}`}
  >
    <Icon name={icon} />
    <span className="mt-1 w-12 leading-3">{text}</span>
  </button>
);
const Group = ({ children, className = '' }: { children: ReactNode; className?: string }) => (
  <div role="toolbar" className={`flex shrink-0 items-center border-t border-l border-white ${className}`}>
    <Grip />
    {children}
  </div>
);
const endLine = 'border-r border-r-[#bdb6bd]';

const menus: [string, string][] = [
  ['文件', 'F'], ['编辑', 'E'], ['视图', 'V'], ['插入', 'S'], ['格式', 'R'], ['工具', 'T'], ['装配', 'A'],
  ['信息', 'I'], ['分析', 'L'], ['首选项', 'P'], ['窗口', 'O'], ['GC 工具箱', ''], ['帮助', 'H'],
];

const serif = "font-['Liberation_Serif','Noto_Sans_CJK_SC',serif]";

function TitleBar() {
  return (
    <header className="flex h-[30px] shrink-0 items-center bg-[linear-gradient(#101010_0_1px,#77777b_2px,#5a595e_9px,#141414_10px,#1c1c1c)] pr-[5px] pl-[6px] text-white">
      <Icon name="nx" className="size-4" />
      <h1 className="ml-[5px] font-['Noto_Sans','Noto_Sans_CJK_SC',sans-serif] text-[13px] whitespace-pre">
        NX 8.5 - <span className="text-xs">建模</span> - [MJ_zhuangpeitu_UG.prt<span className="text-xs">（修改的） </span>]
      </h1>
      <span className="ml-auto font-['DejaVu_Sans',sans-serif] text-xs font-bold">SIEMENS</span>
      <div className="ml-6 flex gap-1">
        {(['min', 'max', 'close'] as const).map((k) => (
          <button
            key={k}
            aria-label={k === 'min' ? '最小化' : k === 'max' ? '最大化' : '关闭'}
            className={`flex size-[19px] items-center justify-center rounded-[3px] border ${
              k === 'close'
                ? 'border-[#f0a090] bg-linear-to-b from-[#e87060] to-[#d83818]'
                : 'border-[#88888c] bg-linear-to-b from-[#6a6a6e] to-[#333]'
            }`}
          >
            <svg viewBox="0 0 13 13" className="size-[13px]" fill="none" stroke="#fff">
              {k === 'min' && <path d="M1 10h7" strokeWidth="3" />}
              {k === 'max' && <path d="M1.500 2v9.500h10V2M1 2h11" strokeWidth="2" />}
              {k === 'close' && <path d="M2 2l9 9M11 2l-9 9" strokeWidth="2.600" />}
            </svg>
          </button>
        ))}
      </div>
    </header>
  );
}

function MenuBar() {
  return (
    <nav className="flex h-[23px] shrink-0 items-center border-b border-[#c8c8c8] bg-[#e6e6e8] pr-[5px]">
      <Grip />
      <Icon name="part" className="ml-px size-4" />
      <div className="ml-[6px] flex gap-[13px] text-xs">
        {menus.map(([name, key]) => (
          <button key={name} className="flex items-center whitespace-nowrap">
            {key ? (
              <>
                {name}
                <span className={`w-[18px] text-center ${serif}`}>
                  (<u>{key}</u>)
                </span>
              </>
            ) : (
              <>
                <span className={`w-[18px] text-left text-[10px] ${serif}`}>GC</span>工具箱
              </>
            )}
          </button>
        ))}
      </div>
      <div className="ml-auto flex gap-[2px]">
        {['M4 11h6', 'M6 6V4h7v6h-2M4 7h7v6H4zM4 8h7', 'M5 4l7 8M12 4l-7 8'].map((d, i) => (
          <button
            key={d}
            aria-label={['最小化文档', '还原文档', '关闭文档'][i]}
            className="flex size-[17px] items-center justify-center rounded-[3px] border border-[#8a8a8a] bg-[#fafafa]"
          >
            <svg viewBox="0 0 17 17" className="size-[17px]" fill="none" stroke="#606060" strokeWidth={i === 1 ? 1.4 : 2.2}>
              <path d={d} />
            </svg>
          </button>
        ))}
      </div>
    </nav>
  );
}

const Row = ({ children, className }: { children: ReactNode; className: string }) => (
  <div className={`flex shrink-0 ${className}`}>{children}</div>
);

function StandardBar() {
  return (
    <Row className="h-[35px] bg-linear-to-b from-[#e3e3e3] to-[#dbdcdb]">
      <Group className={endLine}>
        <Tool icon="nx" label="NX" />
        <button className="text-xs">开始</button>
        <Drop />
        <Tool icon="newDoc" label="新建" />
        <Tool icon="open" label="打开" />
        <Tool icon="save" label="保存" />
        <Sep />
        <Tool icon="cut" label="剪切" />
        <Tool icon="copy" label="复制" />
        <Tool icon="paste" label="粘贴" />
        <Tool icon="del" label="删除" />
        <Sep />
        <Tool icon="undo" label="撤消" />
        <Tool icon="redo" label="重做" />
        <Sep />
        <button className="flex items-center text-xs">
          <span className="flex w-[31px] justify-center"><Icon name="finder" /></span>
          命令查找器
        </button>
        <span className="w-[2px]" />
        <Tool icon="orient" label="定向" />
        <Drop />
        <Overflow />
        <span className="w-[2px]" />
      </Group>
      <Group className={endLine}>
        <Tool icon="fit" label="适合窗口" /><Drop />
        <Tool icon="hinge" label="视图操作" /><Drop />
        <Tool icon="shaded" label="着色" /><Drop />
        <Tool icon="blankBg" label="背景" /><Drop />
        <Sep />
        <Tool icon="viewA" label="编辑剖切" />
        <Tool icon="viewB" label="剪切截面" />
        <Overflow />
      </Group>
      <Group className={endLine}>
        <Tool icon="palette" label="编辑对象显示" />
        <Sep />
        <Tool icon="play" label="显示和隐藏" /><Drop />
        <Sep />
        <Tool icon="measureD" label="测量" /><Drop />
        <Tool icon="ruler" label="测量距离" />
        <Overflow />
      </Group>
    </Row>
  );
}

function FeatureBar() {
  return (
    <Row className="h-[62px] border-b border-[#d8d8d8] bg-linear-to-b from-[#dbdcdb] to-[#ced1ce]">
      <Group className={`w-[600px] ${endLine}`}>
        <Big icon="datum" text="基准平面" /><Drop />
        <Big icon="extrude" text="拉伸" /><Drop />
        <Big icon="hole" text="孔" />
        <Big icon="thread" text="螺纹" />
        <Sep />
        <Big icon="pattern" text="阵列特征" /><Drop />
        <Big icon="unite" text="求和" /><Drop />
        <Big icon="trim" text="修剪体" /><Drop />
        <Big icon="shell" text="抽壳" />
        <span className="flex-1" />
        <Overflow wide />
      </Group>
      <Group className={endLine}>
        <Big icon="offset" text="偏置区域" /><Drop />
        <Big icon="delFace" text="删除面" />
        <Overflow />
      </Group>
      <Group className={endLine}>
        <Tool icon="checkG" label="检查" />
        <Tool icon="treeG" label="结构" />
        <Tool icon="tableG" label="表格" />
        <Tool icon="csys" label="坐标系" />
        <Overflow />
      </Group>
      <Group className="min-w-0 flex-1 overflow-hidden">
        <span className="w-px" />
        <Big icon="sphere" text="真实着色" />
        <Big icon="sphereDim" text="光亮金属刷色" off /><Drop />
        <Big icon="plasticDim" text="红色亮泽塑料" off /><Drop />
        <Big icon="bgDim" text="无全局反射图" off /><Drop />
        <Big icon="bgDim2" text="渐变深灰色背景" off /><Drop />
        <Big icon="lamp" text="显示阴影" on />
        <Big icon="floorDim" text="显示地板反射" off />
        <Big icon="gridDim" text="显示地板栅格" off />
        <span className="flex-1" />
        <Overflow wide />
        <span className="w-[3px]" />
      </Group>
    </Row>
  );
}

function UtilityBar() {
  return (
    <Row className="h-[35px] border-b-2 border-[#9c9c9c] bg-linear-to-b from-[#cfd1cf] to-[#cbcdcb]">
      <Group className={endLine}>
        <Tool icon="sketchBox" label="WCS" />
        <Tool icon="layers" label="图层" />
        <Tool icon="layerList" label="图层设置" />
        <Sep />
        <Tool icon="tag" label="标签" />
        <Sep />
        <Tool icon="partCheck" label="检查部件" />
        <Tool icon="hammerCheck" label="检查工具" />
        <Tool icon="cubeCheck" label="检查装配" />
        <Sep />
        <Tool icon="abc" label="属性" />
        <Overflow />
      </Group>
      <Group className={endLine}>
        <Tool icon="bendA" label="折弯" />
        <Tool icon="bendB" label="展平" />
        <Tool icon="stretch" label="伸缩" />
        <Overflow />
      </Group>
      <Group className={endLine}>
        <Tool icon="springV" label="压缩弹簧" />
        <Tool icon="springD" label="拉伸弹簧" />
        <Tool icon="roll" label="碟簧" />
        <Sep />
        <Tool icon="noSpring" label="删除弹簧" />
        <Overflow />
      </Group>
      <Group className={`ml-24 ${endLine}`}>
        <Tool icon="tri" label="三角" />
        <Tool icon="tableTri" label="表" />
        <Tool icon="folderPts" label="点集" />
        <Tool icon="folderCircles" label="圆集" />
        <Overflow />
      </Group>
      <Group className={`ml-8 ${endLine}`}>
        <Tool icon="lockA" label="锁定" />
        <Tool icon="lockB" label="部分锁定" />
        <Overflow />
      </Group>
    </Row>
  );
}

const Combo = ({ label, value, className }: { label: string; value: string; className: string }) => (
  <div className={`relative flex h-[18px] shrink-0 ${className}`}>
    <select
      aria-label={label}
      className="block h-full w-full appearance-none rounded-[2px] border border-[#777] bg-white p-0 pl-px text-xs leading-4"
    >
      <option>{value}</option>
    </select>
    <span className="pointer-events-none absolute inset-y-px right-px flex w-4 items-center justify-center rounded-[2px] bg-linear-to-b from-[#c8e0ff] to-[#4a94e0]">
      <svg viewBox="0 0 10 6" className="h-[6px] w-[10px]">
        <path d="M0 0h10L5 6z" />
      </svg>
    </span>
  </div>
);

function SelectionBar() {
  return (
    <Row className="h-[26px] items-center bg-linear-to-b from-[#cbcdcb] to-[#dcdcdc] pl-[5px]">
      <Combo label="选择过滤器" value="没有选择过滤器" className="w-[110px]" />
      <Combo label="选择范围" value="整个装配" className="ml-2 w-[116px]" />
      <span className="w-1" />
      <Snap icon="filterDim" label="过滤器" />
      <Sep />
      <Snap icon="funnelDim" label="重置过滤器" />
      <Snap icon="snapCurve" label="捕捉点" />
      <Snap icon="snapFind" label="在导航器中查找" />
      <Sep />
      <Snap icon="body" label="实体" />
      <Snap icon="bodyBlue" label="着色实体" />
      <Sep />
      <Snap icon="lineEnd" label="端点" on />
      <Snap icon="lineMid" label="中点" on />
      <Snap icon="curvePt" label="控制点" />
      <Snap icon="crossPt" label="交点" />
      <Snap icon="centerPt" label="圆弧中心" on />
      <Snap icon="quadPt" label="象限点" />
      <Snap icon="plusPt" label="现有点" on />
      <Snap icon="linePt" label="曲线上的点" on />
      <Snap icon="facePt" label="面上的点" />
      <Sep />
      <Snap icon="gridPt" label="栅格点" />
      <span className="flex-1" />
      <Overflow />
      <span className="w-[3px]" />
    </Row>
  );
}

function StatusBar() {
  return (
    <div className="flex h-[23px] shrink-0 items-stretch border-t border-b-2 border-t-white border-b-[#aaa] bg-[#d9dad9] text-xs font-bold">
      <span className="w-[46.5%]" />
      <p className="flex flex-1 items-center border-l border-white pl-1 whitespace-pre" role="status">
        体<span className={`w-[22px] pl-[2px] ${serif}`}>(0)</span> 已选定
      </p>
      <span className="w-5 border-l border-white" />
      <span className="w-9 border-l border-white" />
      <span className="flex w-11 items-center gap-[5px] border-l border-white pl-[3px]">
        <button aria-label="显示状态"><Icon name="shadeBox" className="size-4" /></button>
        <button aria-label="全屏"><Icon name="fullscreen" className="size-[14px]" /></button>
      </span>
    </div>
  );
}

/* ------------------------------------------------------------------ */
/* Left dock                                                           */
/* ------------------------------------------------------------------ */

const tabs: [IconName, string, boolean][] = [
  ['asmNav', '装配导航器', false],
  ['mirror', '约束导航器', false],
  ['partNav', '部件导航器', false],
  ['books', '重用库', false],
  ['info', 'HD3D 工具', true],
  ['web', 'Web 浏览器', true],
  ['clock', '历史记录', true],
  ['roles', '系统材料', false],
  ['spectrum', '加工向导', false],
  ['wandBlue', '工艺向导', false],
  ['people', '角色', false],
  ['photoBook', '系统场景', false],
];

const ResourceRail = () => (
  <div className="flex w-8 shrink-0 flex-col items-end gap-[2px] overflow-hidden bg-linear-to-b from-[#989898] via-[#a2a2a2] to-[#b4b4b4] pt-[17px]">
    {tabs.map(([icon, label, gap]) => (
      <button
        key={label}
        aria-label={label}
        className={`flex h-10 shrink-0 items-center justify-center rounded-l-[3px] border border-r-0 border-[#777] ${
          icon === 'partNav' ? 'w-7 bg-[#f0f0f0]' : 'w-[26px] bg-[#cfcfcf]'
        } ${gap ? 'mt-3' : ''}`}
      >
        <Icon name={icon} className="size-[22px]" />
      </button>
    ))}
  </div>
);

const bodies = [0, 1, 2, 4, 5, 7, 9, 11, 13, 15];

const Expander = ({ open = false }: { open?: boolean }) => (
  <button aria-label={open ? '折叠' : '展开'} className="flex size-[9px] items-center justify-center rounded-[2px] border border-[#a0a0a0] bg-[#f8f8f8]">
    <svg viewBox="0 0 7 7" className="size-[7px]" stroke="#333">
      <path d={open ? 'M1 3.500h5' : 'M1 3.500h5M3.500 1v5'} />
    </svg>
  </button>
);

const folders: [IconName[], string, boolean][] = [
  [['clock', 'sheet'], '图纸', false],
  [['folderEq'], '用户表达式', false],
  [['folder'], '组', false],
  [['folder'], '模型历史记录', true],
];

const headBg = 'bg-linear-to-b from-[#f8f8f8] to-[#d2d2d4]';
const SortMark = () => (
  <svg viewBox="0 0 10 6" className="h-[6px] w-[10px]">
    <path d="M5 0l5 6H0z" fill="#222" />
  </svg>
);
const Arrow = ({ d }: { d: string }) => (
  <svg viewBox="0 0 6 6" className="size-[6px]" fill="#333">
    <path d={d} />
  </svg>
);

function TreeView() {
  return (
    <div className="ml-[9px] flex min-h-0 w-[278px] flex-1 flex-col border border-[#777] bg-white">
      <div className={`flex h-[17px] shrink-0 text-xs leading-4 ${headBg} border-b border-[#ccc]`}>
        <span className="flex w-[201px] items-center gap-4 border-r border-[#c0c0c0] pl-[6px]">名称 <SortMark /></span>
        <span className="pl-[5px]">附注</span>
      </div>
      <div className="flex min-h-0 flex-1">
        <div className="min-h-0 flex-1 overflow-hidden">
          <table className="w-full table-fixed border-collapse text-xs text-[#333]">
            <colgroup>
              <col className="w-[201px]" />
              <col />
            </colgroup>
            <tbody>
              {folders.map(([names, text, open], i) => (
                <tr key={text} className={`h-5 border-b border-[#dcdcdc] ${i % 2 ? 'bg-white' : 'bg-[#f3f3f3]'}`}>
                  <td className="border-r border-[#dcdcdc] p-0">
                    <div className="flex h-[19px] items-center pl-[5px]">
                      <Expander open={open} />
                      <span className="ml-px w-[5px] border-t border-dotted border-[#999]" />
                      {names.map((n) => <Icon key={n} name={n} className="size-4" />)}
                      <span className="ml-[2px]">{text}</span>
                    </div>
                  </td>
                  <td className="p-0" />
                </tr>
              ))}
              {bodies.map((n, i) => (
                <tr
                  key={n}
                  className={`h-5 border-b ${
                    n === 0
                      ? 'border-[#c88830] bg-[#3396f8] text-white'
                      : i % 2
                        ? 'border-[#dcdcdc] bg-white'
                        : 'border-[#dcdcdc] bg-[#f3f3f3]'
                  }`}
                >
                  <td className="border-r border-[#dcdcdc] p-0">
                    <label className={`flex h-[19px] items-center pl-[29px] ${n === 0 ? 'bg-[linear-gradient(to_right,#f3f3f3_72px,#3396f8_72px)]' : ''}`}>
                      <span className="h-5 w-[11px] border-l border-dotted border-[#999]">
                        <span className="block h-[10px] w-2 border-b border-dotted border-[#999]" />
                      </span>
                      <span className="relative flex size-3">
                        <input type="checkbox" defaultChecked className="peer size-3 appearance-none border border-black bg-white" />
                        <svg viewBox="0 0 12 12" className="pointer-events-none absolute inset-0 hidden size-3 peer-checked:block">
                          <path d="M2.500 5.500l3 4L10 2.500" fill="none" stroke="#10a020" strokeWidth="2.200" />
                        </svg>
                      </span>
                      <span className="ml-[2px] flex"><Icon name="bodyNode" className="size-4" /></span>
                      <span className="ml-[3px]">体</span>
                      <span className={`ml-2 ${serif}`}>({n})</span>
                    </label>
                  </td>
                  <td className="p-0" />
                </tr>
              ))}
            </tbody>
          </table>
        </div>
        <div className="flex w-[18px] shrink-0 flex-col items-center justify-between border-l border-[#eee] bg-[#f2f2f2] py-[6px]">
          <div className="flex w-full flex-col items-center gap-[6px]">
            <button aria-label="向上滚动"><Arrow d="M3 1l3 4H0z" /></button>
            <span className="h-[15px] w-[14px] rounded-[2px] border border-[#a0a0a0] bg-linear-to-r from-white to-[#ccc]" />
          </div>
          <button aria-label="向下滚动"><Arrow d="M3 5l3-4H0z" /></button>
        </div>
      </div>
      <div className="flex h-[17px] shrink-0 items-center bg-[#f2f2f2] pr-6 pl-[6px]">
        <button aria-label="向左滚动"><Arrow d="M1 3l4-3v6z" /></button>
        <span className="ml-[7px] flex h-[14px] w-[188px] items-center justify-center rounded-[2px] border border-[#a0a0a0] bg-linear-to-b from-[#f8f8f8] to-[#c8c8c8]">
          <svg viewBox="0 0 9 7" className="h-[7px] w-[9px]" stroke="#555">
            <path d="M1.500 0v7M4.500 0v7M7.500 0v7" />
          </svg>
        </span>
        <button aria-label="向右滚动" className="ml-auto"><Arrow d="M5 3L1 0v6z" /></button>
      </div>
    </div>
  );
}

const Section = ({ title, open = false }: { title: string; open?: boolean }) => (
  <button
    aria-expanded={open}
    className="ml-[9px] flex h-[23px] w-[278px] shrink-0 items-stretch justify-between border border-t-white border-r-[#999] border-b-[#888] border-l-[#bbb] bg-linear-to-b from-[#fafafa] to-[#d4d4d6] text-xs leading-5 font-bold"
  >
    <span className="pl-[6px]">{title}</span>
    <span className="flex w-[23px] items-center justify-center border-l border-[#999]">
      <svg viewBox="0 0 12 10" className="h-[10px] w-3" fill="none" stroke="#555" strokeWidth="2.400">
        <path d={open ? 'M1 9l5-7 5 7' : 'M1 1l5 7 5-7'} />
      </svg>
    </span>
  </button>
);

function Details() {
  return (
    <div className="ml-[9px] h-[294px] w-[278px] shrink-0 bg-[#cbcbcd] px-[6px] pt-1 pb-[6px]">
      <div className="h-full overflow-hidden border border-[#666] bg-white">
        <table className="w-full table-fixed border-collapse text-xs">
          <colgroup>
            <col className="w-[49px]" />
            <col className="w-8" />
            <col className="w-16" />
            <col />
          </colgroup>
          <thead>
            <tr className={`h-[17px] border-b border-[#aaa] text-left leading-4 ${headBg}`}>
              <th className="border-r border-[#bbb] p-0 pl-[6px] font-normal">参数</th>
              <th className="border-r border-[#bbb] p-0 pl-[6px] font-normal">值</th>
              <th className="border-r border-[#bbb] p-0 pl-[6px] font-normal">
                <span className="flex items-center gap-[6px] whitespace-nowrap">表达式 <SortMark /></span>
              </th>
              <th className="p-0" />
            </tr>
          </thead>
          <tbody>
            {Array.from({ length: 14 }, (_, r) => (
              <tr key={r} className={`h-5 border-b border-[#d8dad8] ${r % 2 ? 'bg-[#f5f5f5]' : 'bg-white'}`}>
                {[0, 1, 2, 3].map((c) => (
                  <td key={c} className={c < 3 ? 'border-r border-[#d8dad8] p-0' : 'p-0'} />
                ))}
              </tr>
            ))}
          </tbody>
        </table>
      </div>
    </div>
  );
}

const NavigatorPanel = () => (
  <aside className="flex w-[299px] shrink-0 flex-col border-r-2 border-l border-r-[#999] border-l-[#888] bg-[#ececee]">
    <div className="flex h-[31px] shrink-0 items-center pl-[15px]">
      <Icon name="pin" className="size-[11px]" />
      <h2 className="ml-[13px] text-[13px] font-bold">部件导航器</h2>
    </div>
    <TreeView />
    <div className="ml-[9px] flex h-3 w-[278px] shrink-0 items-center gap-1">
      <span className="flex-1 border-t border-[#c0c0c0]" />
      <span className="h-[6px] w-[50px] border border-[#bbb] bg-[#d4d4d4]" />
      <span className="flex-1 border-t border-[#c0c0c0]" />
    </div>
    <Section title="相依性" />
    <Section title="细节" open />
    <Details />
    <Section title="预览" />
    <div className="h-[6px] shrink-0" />
  </aside>
);

/* ------------------------------------------------------------------ */
/* Graphics window                                                     */
/* ------------------------------------------------------------------ */

const screws = [
  [840, 330], [881, 352], [925, 376], [968, 399], [1010, 421],
  [553, 480], [594, 502], [638, 525], [723, 570],
];

const Screw = ({ x, y }: { x: number; y: number }) => (
  <g transform={`translate(${x} ${y}) rotate(-6)`}>
    <ellipse rx="10" ry="5.500" />
    <ellipse rx="7" ry="3.500" fill="none" stroke="#10a010" strokeWidth="0.900" strokeDasharray="5 2" />
    <ellipse rx="3.500" ry="2.400" fill="#10a010" />
  </g>
);

const shellOuter =
  'M665 548 C666 536 676 528 684 524 C698 512 712 504 726 498 C742 488 760 480 775 475 C786 470 800 468 812 469 C822 469 832 472 840 475 L882 495 L916 514 C926 520 928 532 925 540 C914 552 898 560 884 569 L846 591 C832 598 818 603 804 608 C790 612 764 610 748 606 C730 599 712 588 700 582 C686 575 672 566 667 558 Z';
const shellHoles =
  'M808 492 C814 485 824 484 835 486 L896 516 C906 524 903 529 896 532 C890 536 884 536 880 533 L846 512 Z ' +
  'M688 554 C692 547 702 544 714 547 L722 558 L740 566 L783 589 C779 595 766 597 756 594 L708 569 Z ' +
  'M739 533 L750 526 L752 531 L762 525 L763 518 L776 514 L778 518 L786 516 L786 512 L797 510 L799 515 L806 513 L812 509 L860 535 L832 550 L828 549 L800 567 L770 551 Z ' +
  'M685 543 L692 535 L703 531 L704 537 L692 541 Z ' +
  'M704 528 L730 514 L766 496 L779 492 L778 495 L740 513 L712 530 Z ' +
  'M780 489 L800 481 L812 478 L796 487 L783 491 Z';

const line = { stroke: '#000', strokeWidth: 1.3, strokeLinejoin: 'round' as const };

function Viewport() {
  return (
    <main className="flex min-h-0 min-w-0 flex-1 bg-black">
      <svg viewBox="335 234 1150 722" className="h-full w-full min-w-0" role="img" aria-label="模具装配三维视图">
        <defs>
          <linearGradient id="pin" x1="0" x2="1">
            <stop offset="0" stopColor="#8c8600" />
            <stop offset="0.400" stopColor="#f4ee10" />
            <stop offset="1" stopColor="#a8a000" />
          </linearGradient>
          <linearGradient id="blueHole" x1="0" x2="1" y2="1">
            <stop offset="0" stopColor="#78a8d8" />
            <stop offset="1" stopColor="#d8f0ff" />
          </linearGradient>
          <linearGradient id="redHole" x1="1" x2="0" y2="1">
            <stop offset="0" stopColor="#c07070" />
            <stop offset="1" stopColor="#ffc0c0" />
          </linearGradient>
          <linearGradient id="bore" x1="0" x2="1">
            <stop offset="0" stopColor="#777" />
            <stop offset="0.500" stopColor="#e0e0e0" />
            <stop offset="1" stopColor="#aaa" />
          </linearGradient>
        </defs>

        {/* base plate */}
        <g {...line}>
          <polygon points="495,752 518,739 1127,681 1151,694 765,895" fill="#fff" />
          <polygon points="495,752 765,895 768,913 497,770" fill="#a2a4a2" />
          <polygon points="765,895 1151,694 1154,713 768,913" fill="#cdd1cd" />
        </g>
        <path d="M514 743l-14 7 11 5 3-2-7-4 9-4z" fill="#fff" {...line} />

        {/* ejector space */}
        <g {...line}>
          <polygon points="998,660 1059,630 1074,733 1070,735 1064,698" fill="#9fa29f" />
          <polygon points="827,752 1003,664 1064,698 842,814 836,811" fill="#fff" />
          <polygon points="836,811 842,814 844,829 838,827" fill="#808894" />
          <polygon points="842,814 1064,699 1066,714 844,829" fill="#a4acc0" />
          <polygon points="838,827 844,829 846,849 841,847" fill="#a08090" />
          <polygon points="844,829 1066,714 1070,733 846,849" fill="#caacba" />
          <polygon points="841,855 846,849 1070,734 1074,733" fill="#bbb" strokeWidth="1" />
        </g>
        <g fill="#2038c8" stroke="#000">
          <ellipse cx="842" cy="808" rx="3.500" ry="2" />
          <ellipse cx="1052" cy="699" rx="3.500" ry="2" />
        </g>
        <path d="M829 745h16l8 57c-3 4-14 4-17 0z" fill="url(#pin)" stroke="#444000" />
        <path d="M1020 640h16l8 60c-3 5-14 5-17 1z" fill="url(#pin)" stroke="#444000" />
        <path d="M968 660l28-2 3 30c-4 9-26 10-31 3z" fill="#2a2ad0" />
        <path
          d="M968 670c8 5 22 4 29-3M968 675c8 5 22 4 30-3M968 680c8 5 22 4 30-3M968 685c8 5 22 4 31-3M968 690c8 6 24 4 31-3"
          fill="none"
          stroke="#05053a"
          strokeWidth="2"
        />

        {/* spacer blocks */}
        <g {...line}>
          <polygon points="501,638 772,783 787,882 517,739" fill="#a0a3a0" />
          <polygon points="772,783 827,754 842,855 787,882" fill="#cdd1cd" />
          <polygon points="1059,634 1114,606 1129,705 1074,733" fill="#cdd1cd" />
        </g>

        {/* moving and fixed plates */}
        <g {...line}>
          <polygon points="490,559 760,703 772,783 501,639" fill="#a05c5c" />
          <polygon points="760,703 1101,528 1114,606 772,783" fill="#cc7676" />
          <polygon points="483,510 748,625 760,702 490,558" fill="#6282a2" />
          <polygon points="748,625 1090,450 1101,527 760,702" fill="#7aa6d0" />
        </g>

        {/* clamping plate */}
        <g {...line}>
          <polygon points="454,481 839,278 1110,424 723,624" fill="#fff" />
          <polygon points="454,481 723,624 726,644 456,498" fill="#a2a2a2" />
          <polygon points="723,624 1110,424 1113,442 726,644" fill="#cdd1cd" />
        </g>

        {/* parting outline */}
        <g fill="none" stroke="#fff" strokeWidth="2.200" strokeLinejoin="round">
          <path d="M760 702L490 558l-20 10q-4 2 0 4l263 141q4 2 9 0l381-199q2-2-2-4l-23-11" />
          <path d="M472 555l8-2 1 4-6 1M473 559l5 4 4-4" />
        </g>
        <path d="M603 641l11-5M617 634l6-3" stroke="#f01010" strokeWidth="1.500" />

        <g fill="#555" stroke="#000" strokeWidth="1.200">
          {[[581, 651], [620, 672], [643, 685], [682, 706]].map(([x, y]) => (
            <ellipse key={x} cx={x} cy={y} rx="2.600" ry="4" transform={`rotate(-15 ${x} ${y})`} />
          ))}
        </g>
        <ellipse cx="925" cy="578" rx="9.500" ry="12" transform="rotate(20 925 578)" fill="url(#blueHole)" {...line} />
        <ellipse cx="937" cy="654" rx="9.500" ry="12" transform="rotate(20 937 654)" fill="url(#redHole)" {...line} />

        {screws.map(([x, y]) => <Screw key={x} x={x} y={y} />)}

        {/* locating ring */}
        <g transform="rotate(-6 781 448)" stroke="#000" strokeWidth="1.800">
          <ellipse cx="781" cy="450" rx="35" ry="19" fill="#a84c20" />
          <ellipse cx="781" cy="446" rx="35" ry="18.500" fill="#f88848" />
          <ellipse cx="782" cy="447" rx="27" ry="14" fill="#a04a20" />
          <path d="M756 451c8-10 44-10 51-1-6 13-42 14-51 1z" fill="#fff" stroke="none" />
          <path d="M767 456c-2-13 28-14 28-1-6 6-20 7-28 1z" fill="url(#bore)" strokeWidth="1.200" />
        </g>
        <ellipse cx="757" cy="458" rx="3.500" ry="2" />
        <ellipse cx="804" cy="433" rx="3.500" ry="2" />

        {/* selected body */}
        <path d={`${shellOuter} ${shellHoles}`} fill="#fb9f42" fillRule="evenodd" stroke="#fb9f42" strokeWidth="1" />
        <path
          d="M686 523l-3-1M725 498l-2-2M750 486l-1-2M836 473l3-1M858 483l2-2M882 494l2-2"
          stroke="#fb9f42"
          strokeWidth="4"
        />
        <g fill="none" stroke="#fff">
          <path d="M702 520L730 504M738 500l36-16M672 550c2 8 10 12 16 16l26 14 34 18" strokeDasharray="16 5" />
          <path d="M806 498l50 25c9 5 12 9 9 14l-5 1" strokeWidth="2" />
          <path d="M735 557l34 18" strokeDasharray="8 5" strokeWidth="1.500" />
          <path d="M757 516l6-6M768 508l8-3M738 551l12-6M757 562l10 3M788 573l4-8 5 2M800 575l7-4M846 552l3-6M822 563l3-4" strokeWidth="2" />
        </g>
        <g fill="none" stroke="#c6c8c6" strokeWidth="4" strokeDasharray="14 3">
          <path d="M815 586l58-28M888 540l16-8M796 590l9-3" />
        </g>
        <path d="M840 583l24-12M765 602h4M887 539h10M682 543l4-1" stroke="#443018" strokeWidth="1" />
        <path
          d="M754 522v8M759 518l4 8M780 512l5 7M800 508v6M715 548l3 10M722 548l10 8"
          stroke="#fb9f42"
          strokeWidth="5"
        />

        {/* datum coordinate system */}
        <g fontFamily="Liberation Sans" fontSize="12" fill="#999">
          <path d="M795 541l-9-65M795 541l-90 46M795 541l88 44M830 508l5 40" stroke="#b8b8b0" />
          <path d="M795 541l-6-44h4z" fill="#6080c0" />
          <path d="M795 541l-26 13M795 541l28 14" stroke="#80a080" />
          <path d="M813 549l12 6-4 3z" fill="#609060" />
          <path d="M779 429l6 13-11 0z" fill="#606050" />
          <path d="M780 440l4 32" stroke="#aaa" />
          <path d="M706 588l-15 7 13-1zM866 580l14 7-8-8z" fill="#aaa" />
          <text x="773" y="427" fill="#8a8468">Z</text>
          <text x="683" y="603">X</text>
          <text x="878" y="592" fill="#b8bcc0">Y</text>
          <text x="793" y="489" fontSize="8" fill="#2040e0">Z</text>
        </g>

        {/* view triad */}
        <g>
          <polygon points="390,875 405,882 409,902 391,913 374,904 372,885" fill="#a8a8a8" stroke="#c8c8c8" />
          <path d="M390 875l3 20-19 9M393 895l16 7M393 895l-21-10M393 895l12-13M393 895l-2 18" stroke="#c4c4c4" fill="none" />
          <path d="M390 873l3 21" stroke="#8090e8" strokeWidth="2" />
          <path d="M393 895l-19 9" stroke="#e89090" strokeWidth="2" />
          <circle cx="393" cy="895" r="4" fill="#ddd" />
          <path d="M389 862l4 12-8 0z" fill="#1850e0" />
          <path d="M374 903l-11 8 11 1z" fill="#e83838" />
          <path d="M409 902l12 8-10 1z" fill="#28a030" />
          <g fontFamily="Liberation Sans" fontSize="10.500" fontWeight="bold">
            <text x="384" y="861" fill="#1f5cf0">Z</text>
            <text x="355" y="918" fill="#f04848">X</text>
            <text x="418" y="915" fill="#30b038">Y</text>
          </g>
        </g>
      </svg>
    </main>
  );
}

/* ------------------------------------------------------------------ */
/* Bottom toolbars                                                     */
/* ------------------------------------------------------------------ */

function AssemblyBar() {
  return (
    <Row className="h-[34px] bg-linear-to-b from-[#e4e4e4] to-[#dadbda]">
      <Group className={`border-b border-b-[#c4c4c4] ${endLine}`}>
        <Tool icon="shadeBox" label="装配" />
        <Tool icon="cubePlus" label="添加组件" />
        <Tool icon="cubeMove" label="移动组件" />
        <Tool icon="mirror" label="镜像装配" />
        <Sep />
        <Tool icon="cubeTrio" label="爆炸图" />
        <Overflow />
      </Group>
    </Row>
  );
}

function SketchBar() {
  return (
    <Row className="h-[34px] bg-linear-to-b from-[#d6d7d6] to-[#cdd0cd] pl-[150px]">
      <Group className={endLine}>
        <Tool icon="sketchNew" label="草图" />
        <button className="flex items-center text-xs text-[#9a9a9a]">
          <span className="flex w-[31px] justify-center"><Icon name="shadeBox" /></span>
          完成草图
        </button>
        <span className="w-[3px]" />
        <Tool icon="profile" label="轮廓" />
        <Tool icon="line" label="直线" />
        <Tool icon="arc" label="圆弧" />
        <Tool icon="circle" label="圆" />
        <Tool icon="fillet" label="圆角" />
        <Tool icon="chamfer" label="倒斜角" />
        <Tool icon="rect" label="矩形" />
        <Tool icon="spline" label="艺术样条" />
        <Tool icon="plus" label="点" />
        <Tool icon="offsetC" label="偏置曲线" />
        <Drop />
        <Sep />
        <Tool icon="trimC" label="快速修剪" />
        <Tool icon="extendC" label="快速延伸" />
        <Sep />
        <Tool icon="dim" label="自动判断尺寸" />
        <Drop />
        <Sep />
        <Tool icon="para" label="约束" />
        <Tool icon="perp" label="自动约束" />
        <Drop />
        <Tool icon="tangent" label="相切" />
        <Tool icon="showCon" label="显示约束" />
        <Drop />
        <Overflow />
      </Group>
    </Row>
  );
}

export default function App() {
  return (
    <div className="relative flex h-screen flex-col overflow-hidden bg-[#0c0c0c] font-['Noto_Sans_CJK_SC',sans-serif] text-black">
      <TitleBar />
      <div className="mx-1 flex min-h-0 flex-1 flex-col bg-[#dedede]">
        <MenuBar />
        <StandardBar />
        <FeatureBar />
        <UtilityBar />
        <SelectionBar />
        <StatusBar />
        <div className="flex min-h-0 flex-1">
          <ResourceRail />
          <NavigatorPanel />
          <Viewport />
        </div>
        <AssemblyBar />
        <SketchBar />
      </div>
      <footer className="h-2 shrink-0 border-t border-[#5c525c] bg-[#141414]" />
      <div className="absolute bottom-0 left-[40%] flex h-[13px] w-[39px] justify-center overflow-hidden border-2 border-b-0 border-[#2f86f6] bg-[#e4ecf4]">
        <svg viewBox="0 0 24 24" className="mt-[2px] size-5 shrink-0" fill="none" stroke="#a8bcd8" strokeWidth="2">
          <circle cx="12" cy="12" r="10" />
          <circle cx="12" cy="12" r="6" />
        </svg>
      </div>
    </div>
  );
}
